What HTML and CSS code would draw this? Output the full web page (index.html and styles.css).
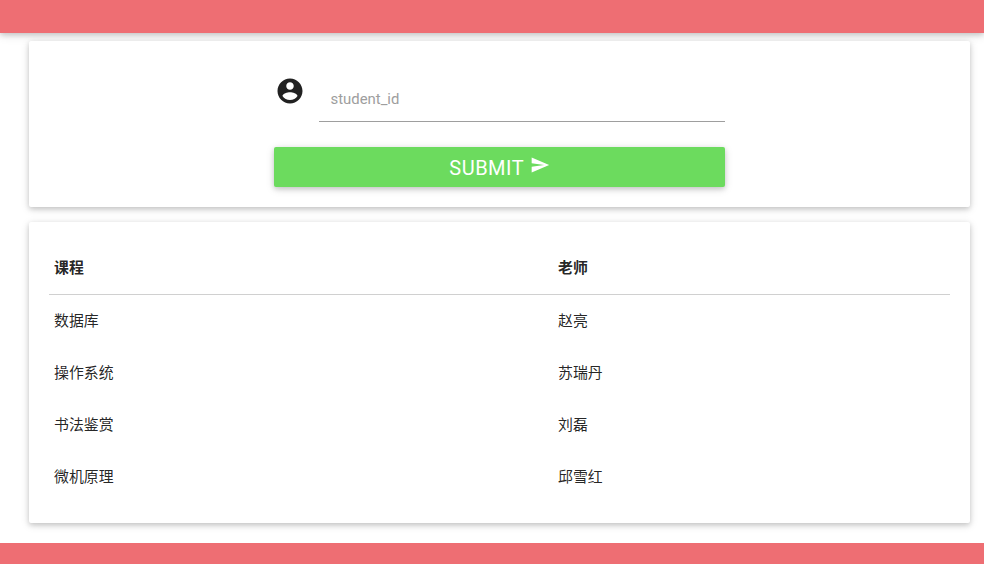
FILE: index.html
```html
<!DOCTYPE html>
<html lang="zh-CN">
<head>
<meta charset="utf-8">
<title>Courses</title>
<link rel="stylesheet" href="styles.css">
</head>
<body>
<header class="bar"></header>
<main class="content">
  <section class="card search">
    <form class="form">
      <div class="field">
        <svg class="account" viewBox="0 0 24 24"><path d="M12 2C6.480 2 2 6.480 2 12s4.480 10 10 10 10-4.480 10-10S17.520 2 12 2zm0 3c1.660 0 3 1.340 3 3s-1.340 3-3 3-3-1.340-3-3 1.340-3 3-3zm0 14.200c-2.500 0-4.710-1.280-6-3.220.030-1.990 4-3.080 6-3.080 1.990 0 5.970 1.090 6 3.080-1.290 1.940-3.500 3.220-6 3.220z"/></svg>
        <label class="input">student_id</label>
      </div>
      <button class="submit" type="button"><span>SUBMIT</span><svg class="send" viewBox="0 0 24 24"><path d="M2.010 21L23 12 2.010 3 2 10l15 2-15 2z"/></svg></button>
    </form>
  </section>
  <section class="card courses">
    <table>
      <thead><tr><th class="course">课程</th><th>老师</th></tr></thead>
      <tbody>
        <tr><td>数据库</td><td>赵亮</td></tr>
        <tr><td>操作系统</td><td>苏瑞丹</td></tr>
        <tr><td>书法鉴赏</td><td>刘磊</td></tr>
        <tr><td>微机原理</td><td>邱雪红</td></tr>
      </tbody>
    </table>
  </section>
</main>
<footer class="footer"></footer>
</body>
</html>
```
FILE: styles.css
```css
* { box-sizing: border-box; }
body {
  margin: 0;
  height: 564px;
  overflow: hidden;
  display: flex;
  flex-direction: column;
  background: #fff;
  color: rgba(0, 0, 0, .87);
  font: 14.9px/22px Roboto, "Noto Sans CJK SC", sans-serif;
}
.bar, .card, .submit {
  box-shadow: 0 2px 5px 0 rgba(0,0,0,.16), 0 2px 10px 0 rgba(0,0,0,.12);
}
.bar { height: 33px; background: #ee6e73; flex: none; }
.content { flex: 1; padding: 8px 14px 0 29px; }
.card { background: #fff; border-radius: 2px; }
.search { height: 166px; margin-bottom: 15px; padding-top: 36px; }
.form { width: 451px; margin: 0 auto; }
.field { display: flex; height: 45px; }
.account { width: 30px; height: 30px; margin: -1px 14.5px 0 .5px; fill: #212121; }
.input {
  flex: 1;
  padding: 11px 0 0 11.500px;
  border-bottom: 1px solid #9e9e9e;
  color: #9e9e9e;
}
.submit {
  display: flex;
  justify-content: center;
  align-items: center;
  width: 100%;
  height: 40px;
  margin-top: 25px;
  padding: 2px 0 0;
  border: 0;
  border-radius: 2px;
  background: #6cdb5e;
  color: #fff;
  font: 20px/38px Roboto, sans-serif;
  letter-spacing: .5px;
}
.send { width: 20px; height: 20px; margin: -7px 0 0 5.500px; fill: #fff; }
.courses { height: 301px; padding: 18px 20px 20px; }
table { width: 100%; border-collapse: collapse; table-layout: fixed; }
th, td { height: 52px; padding: 2px 5px 0; text-align: left; }
thead { border-bottom: 1px solid #d0d0d0; }
th { height: 54px; font-weight: 700; }
.course { width: 504px; }
.footer { position: relative; height: 21px; flex: none; background: #ee6e73; }
```
